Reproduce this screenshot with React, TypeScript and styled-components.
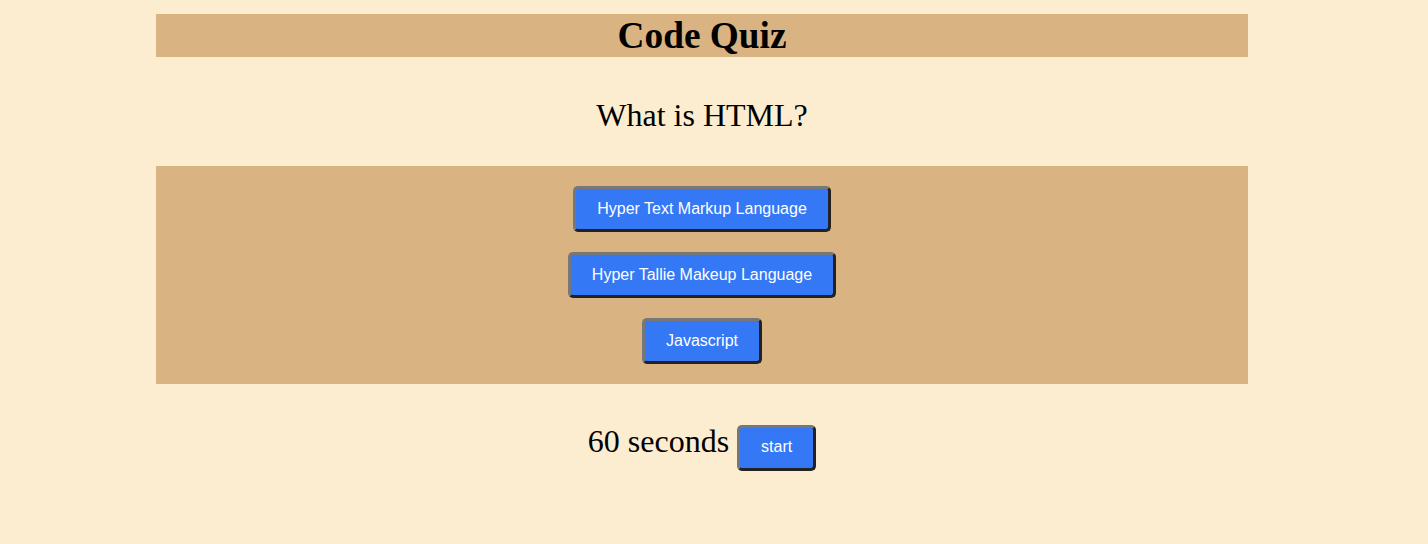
import styled, { createGlobalStyle } from "styled-components";

const GlobalStyle = createGlobalStyle`
  body {
    margin: 0;
    background: #fcecd0;
    font-family: "Liberation Serif", "Times New Roman", serif;
  }
`;

const ANSWERS = [
  "Hyper Text Markup Language",
  "Hyper Tallie Makeup Language",
  "Javascript",
];

const App = () => {
  return (
    <>
      <GlobalStyle />
      <Layout>
        <Header>Code Quiz</Header>
        <Question>What is HTML?</Question>
        <Answers>
          {ANSWERS.map((answer) => (
            <QuizButton key={answer}>{answer}</QuizButton>
          ))}
        </Answers>
        <TimerRow>
          <Timer>60 seconds</Timer>
          <QuizButton>start</QuizButton>
        </TimerRow>
      </Layout>
    </>
  );
};

export default App;

const Layout = styled.div`
  width: 1092px;
  margin: 14px 0 0 156px;
  display: flex;
  flex-direction: column;
  align-items: stretch;
`;

const Header = styled.h1`
  margin: 0;
  background: #d9b382;
  text-align: center;
  font-size: 37.3px;
  font-weight: 700;
  line-height: 43px;
  color: #000;
`;

const Question = styled.div`
  padding: 40px 0 32px;
  text-align: center;
  font-size: 32px;
  line-height: 37px;
  color: #000;
`;

const Answers = styled.div`
  background: #d9b382;
  padding: 20px 0;
  display: flex;
  flex-direction: column;
  align-items: center;
  gap: 20px;
`;

const QuizButton = styled.button`
  box-sizing: border-box;
  height: 46px;
  background: #3478f6;
  color: #fff;
  font-family: "Liberation Sans", Arial, sans-serif;
  font-size: 16px;
  line-height: 19px;
  padding: 9px 21px 11px;
  border: 3px solid;
  border-color: #777 #222 #222 #777;
  border-radius: 5px;
  cursor: pointer;
`;

const TimerRow = styled.div`
  margin-top: 39px;
  display: flex;
  justify-content: center;
  align-items: baseline;
  gap: 8px;
`;

const Timer = styled.span`
  font-size: 32px;
  line-height: 37px;
  color: #000;
`;
